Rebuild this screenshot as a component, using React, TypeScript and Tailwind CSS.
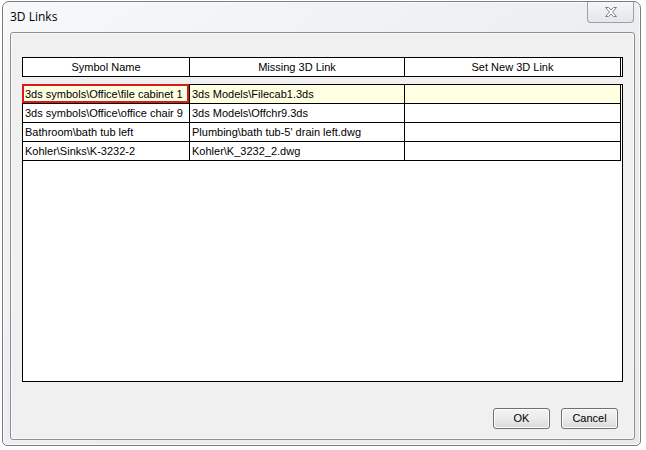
import React from 'react'

interface LinkRow {
  symbol: string
  missing: string
  newLink: string
}

const rows: LinkRow[] = [
  { symbol: '3ds symbols\\Office\\file cabinet 1', missing: '3ds Models\\Filecab1.3ds', newLink: '' },
  { symbol: '3ds symbols\\Office\\office chair 9', missing: '3ds Models\\Offchr9.3ds', newLink: '' },
  { symbol: 'Bathroom\\bath tub left', missing: "Plumbing\\bath tub-5' drain left.dwg", newLink: '' },
  { symbol: 'Kohler\\Sinks\\K-3232-2', missing: 'Kohler\\K_3232_2.dwg', newLink: '' },
]

const CloseGlyph = () => (
  <svg width="14" height="12" viewBox="0 0 14 12">
    <path
      d="M1.5 1.5 L4.5 1.5 L7 4 L9.5 1.5 L12.5 1.5 L8.5 6 L12.5 10.5 L9.5 10.5 L7 8 L4.5 10.5 L1.5 10.5 L5.5 6 Z"
      fill="#ffffff"
      stroke="#7b7f86"
      strokeWidth="1"
      strokeLinejoin="round"
    />
  </svg>
)

const DialogButton: React.FC<{ label: string }> = ({ label }) => (
  <button className="w-[57px] h-[21px] rounded-[3px] border border-[#707070] bg-gradient-to-b from-[#f3f3f3] via-[#ebebeb] to-[#d9d9d9] text-[11px] leading-none text-black shadow-[inset_0_0_0_1px_#fcfcfc]">
    {label}
  </button>
)

export default function App() {
  return (
    <div className="w-[646px] h-[450px] bg-white pt-px pl-[2px] font-['Liberation_Sans',Arial,sans-serif]">
      {/* window frame */}
      <div className="w-[639px] h-[445px] border border-[#7c7c7c] rounded-t-[7px] rounded-b-[5px] bg-gradient-to-br from-[#f7f8fa] via-[#eceef1] to-[#e8eaed] shadow-[inset_0_0_0_1px_#fbfbfb] flex flex-col">
        {/* title bar */}
        <div className="h-[30px] flex items-start justify-between">
          <div className="pl-[7px] pt-[6px] text-[12px] text-black font-['Open_Sans','Noto_Sans',sans-serif]">3D Links</div>
          <div className="mr-[6px] w-[47px] h-[21px] border border-t-0 border-[#9aa0a8] rounded-b-[4px] bg-gradient-to-b from-[#f5f6f8] to-[#e3e6ea] flex items-center justify-center">
            <CloseGlyph />
          </div>
        </div>

        {/* client area */}
        <div className="ml-[7px] mr-[5px] h-[408px] border border-[#8e8f8f] rounded-[3px] bg-[#f0f0f0] shadow-[inset_0_0_0_1px_#fafafa] flex flex-col pl-[11px] pt-[24px]">
          {/* header */}
          <div className="w-[601px] h-[20px] border border-black bg-white flex text-[11px] text-black">
            <div className="w-[167px] border-r border-black flex items-center justify-center">Symbol Name</div>
            <div className="w-[215px] border-r border-black flex items-center justify-center">Missing 3D Link</div>
            <div className="w-[216px] border-r border-black flex items-center justify-center">Set New 3D Link</div>
          </div>

          {/* body */}
          <div className="mt-[7px] w-[601px] h-[298px] border border-black bg-white text-[11px] text-black">
            {rows.map((row, i) => (
              <div key={i} className={`h-[19px] w-[599px] flex ${i === 0 ? 'bg-[#ffffe1]' : 'bg-white'}`}>
                <div className="relative w-[167px] border-r border-b border-black pl-[2px] flex items-center whitespace-nowrap">
                  {row.symbol}
                  {i === 0 && (
                    <div className="absolute -left-px -top-px w-[167px] h-[19px] border-2 border-[#d71a1a]" />
                  )}
                </div>
                <div className="w-[215px] border-r border-b border-black pl-[2px] flex items-center whitespace-nowrap">
                  {row.missing}
                </div>
                <div className="w-[216px] border-r border-b border-black pl-[2px] flex items-center">
                  {row.newLink}
                </div>
              </div>
            ))}
          </div>

          {/* buttons */}
          <div className="mt-[26px] w-[596px] flex justify-end gap-[11px]">
            <DialogButton label="OK" />
            <DialogButton label="Cancel" />
          </div>
        </div>
      </div>
    </div>
  )
}
